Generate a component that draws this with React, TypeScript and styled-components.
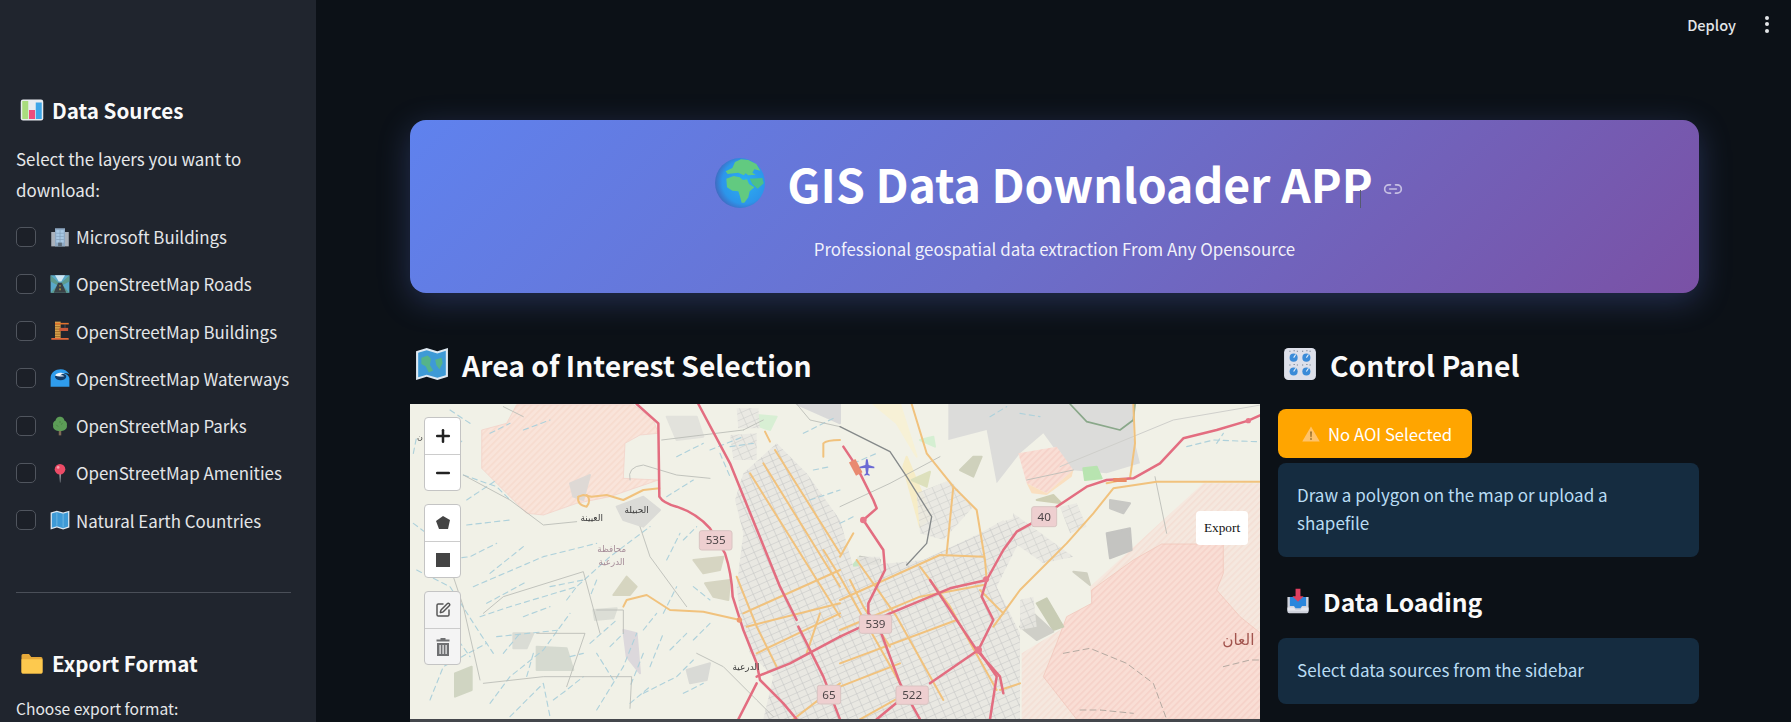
import React from "react";
import styled, { createGlobalStyle } from "styled-components";
import { Link2, Plus, Minus, SquarePen } from "lucide-react";

const Global = createGlobalStyle`
  html, body { margin: 0; padding: 0; background: #0c1117; }
  * { box-sizing: border-box; }
  body { font-family: "Noto Sans CJK SC", "Noto Sans", sans-serif; color: #fafafa; }
`;

const Shell = styled.div`
  display: flex;
  width: 1791px;
  height: 722px;
  overflow: hidden;
  background: #0c1117;
`;
const Sidebar = styled.aside`
  flex: 0 0 316px;
  min-width: 0;
  width: 316px;
  background: #20252e;
  padding: 92px 25px 0 16px;
`;
const SideHeading = styled.h3`
  display: flex;
  align-items: center;
  gap: 8px;
  margin: 0 0 0 4px;
  height: 36px;
  font-size: 20.6px;
  font-weight: 700;
  color: #fafafa;
`;
const SideText = styled.p`
  margin: 16px 0 0;
  font-size: 16.9px;
  line-height: 30.5px;
  color: #e6e8ea;
`;
const LayerList = styled.div`
  display: flex;
  flex-direction: column;
  gap: 27.3px;
  margin-top: 21.5px;
`;
const LayerRow = styled.label`
  display: flex;
  align-items: center;
  height: 20px;
  font-size: 16.9px;
  color: #e4e6e8;
  white-space: nowrap;
`;
const Check = styled.span`
  flex: 0 0 20px;
  width: 20px;
  height: 20px;
  border: 1.5px solid #50555e;
  border-radius: 5px;
  background: #1c2028;
  margin-right: 14px;
`;
const RowIcon = styled.span`
  display: inline-flex;
  margin-right: 6px;
`;
const Rule = styled.hr`
  border: 0;
  border-top: 1px solid #4a4f58;
  margin: 61.5px 0 0;
`;
const ExportHeading = styled(SideHeading)`
  margin-top: 52px;
`;
const SideSmall = styled.p`
  margin: 16px 0 0;
  font-size: 15.6px;
  line-height: 22px;
  color: #e6e8ea;
`;

const Main = styled.main`
  flex: 1;
  min-width: 0;
  display: flex;
  flex-direction: column;
`;
const TopBar = styled.header`
  flex: 0 0 48px;
  display: flex;
  align-items: center;
  justify-content: flex-end;
  gap: 29px;
  padding-right: 22px;
`;
const Deploy = styled.span`
  font-size: 14.6px;
  font-weight: 500;
  color: #e3e5e8;
`;
const Dots = styled.span`
  display: flex;
  flex-direction: column;
  gap: 2.5px;
  & > i { width: 4px; height: 4px; border-radius: 50%; background: #e3e5e8; display: block; }
`;
const Content = styled.div`
  padding: 72px 92px 0 94px;
`;
const Banner = styled.section`
  height: 173px;
  border-radius: 16px;
  background: linear-gradient(135deg, #5f82ee 0%, #6b6fcb 50%, #7a51a5 100%);
  box-shadow: 0 8px 32px rgba(102, 126, 234, 0.28);
  display: flex;
  flex-direction: column;
  align-items: center;
  padding-top: 33px;
`;
const TitleRow = styled.div`
  position: relative;
  display: flex;
  align-items: center;
  height: 60px;
  margin-left: 9px;
`;
const Title = styled.h1`
  margin: 0 0 0 22px;
  font-size: 46.4px;
  line-height: 60px;
  font-weight: 700;
  color: #fff;
  white-space: nowrap;
`;
const LinkMark = styled.span`
  display: inline-flex;
  margin: 12px 0 0 10px;
  color: rgba(255, 255, 255, 0.6);
`;
const Caret = styled.span`
  position: absolute;
  right: 42px;
  top: 37px;
  width: 1px;
  height: 18px;
  background: #555a70;
`;
const Subtitle = styled.p`
  margin: 24px 0 0;
  font-size: 16.9px;
  line-height: 24px;
  color: rgba(255, 255, 255, 0.92);
`;
const Columns = styled.div`
  display: grid;
  grid-template-columns: 850px 421px;
  gap: 18px;
`;
const Heading = styled.h2`
  display: flex;
  align-items: center;
  gap: 13px;
  height: 44px;
  margin: 49px 0 0 5px;
  font-size: 28.3px;
  font-weight: 700;
  color: #fafafa;
  white-space: nowrap;
`;
const MapFrame = styled.div`
  position: relative;
  height: 318px;
  margin-top: 18px;
  background: #44474c;
  overflow: hidden;
`;
const MapArt = styled.svg`
  display: block;
  width: 850px;
  height: 315px;
  filter: blur(0.55px);
`;
const MapTools = styled.div`
  position: absolute;
  left: 14px;
  top: 13px;
  display: flex;
  flex-direction: column;
  gap: 13px;
`;
const ToolGroup = styled.div`
  width: 37px;
  border: 1px solid #c4c4c4;
  border-radius: 4px;
  overflow: hidden;
  background: ${(p: { $muted?: boolean }) => (p.$muted ? "#f4f4f4" : "#fff")};
`;
const ToolButton = styled.div`
  height: 36px;
  display: flex;
  align-items: center;
  justify-content: center;
  color: #222;
  & + & { border-top: 1px solid #ccc; }
`;
const ExportBtn = styled.div`
  position: absolute;
  left: 786px;
  top: 107px;
  width: 52px;
  height: 34px;
  background: #fff;
  border-radius: 4px;
  display: flex;
  align-items: center;
  justify-content: center;
  font-family: "Liberation Serif", serif;
  font-size: 13.3px;
  color: #111;
`;
const Badge = styled.div`
  margin-top: 23px;
  width: 194px;
  height: 49px;
  border-radius: 8px;
  background: #ffa500;
  display: flex;
  align-items: center;
  padding-left: 23px;
  gap: 7px;
  font-size: 16.7px;
  color: #fff;
`;
const Info = styled.div`
  margin-top: ${(p: { $top: number }) => p.$top}px;
  padding: 18px 19px 20px;
  border-radius: 8px;
  background: #152c40;
  color: #b9dcf3;
  font-size: 17px;
  line-height: 28px;
`;
const SubHeading = styled.h2`
  display: flex;
  align-items: center;
  gap: 12px;
  height: 36px;
  margin: 26px 0 0 7px;
  font-size: 24.7px;
  font-weight: 700;
  color: #fafafa;
`;

type E = { s?: number };
const Svg = ({ s = 24, children }: E & { children: React.ReactNode }) => (
  <svg width={s} height={s} viewBox="0 0 32 32" aria-hidden="true">{children}</svg>
);
const ChartE = (p: E) => (
  <Svg {...p}>
    <rect x="1" y="2" width="30" height="28" rx="3" fill="#e8ecf0" />
    <rect x="3" y="4" width="8" height="24" fill="#a9dc7e" />
    <rect x="12" y="16" width="8" height="12" fill="#ee4d7c" />
    <rect x="21" y="6" width="8" height="22" fill="#3ea6e8" />
  </Svg>
);
const BuildingE = (p: E) => (
  <Svg {...p}>
    <rect x="2" y="8" width="28" height="23" fill="#aab2bc" />
    <rect x="8" y="2" width="16" height="29" fill="#8ea9c4" />
    <path d="M10 5h12v20H10z" fill="#a8c8e4" />
    <path d="M10 10h12M10 15h12M10 20h12M16 5v20" stroke="#7f9ab5" strokeWidth="1" />
    <rect x="13" y="25" width="6" height="6" fill="#5c6b7a" />
  </Svg>
);
const RoadE = (p: E) => (
  <Svg {...p}>
    <rect x="1" y="2" width="30" height="28" fill="#5aa9c9" />
    <path d="M1 2l15 14L31 2v10L20 18l11 12H1l11-12L1 12z" fill="#5d9a8d" />
    <path d="M13 14h6l7 16H6z" fill="#3a4046" />
    <path d="M16 18v2M16 23v3" stroke="#f4d23c" strokeWidth="1.5" />
    <path d="M8 2h16l-6 10h-4z" fill="#cfe6f2" />
  </Svg>
);
const CraneE = (p: E) => (
  <Svg {...p}>
    <rect x="8" y="1" width="9" height="27" fill="#d9a24a" />
    <path d="M8 5h9M8 9h9M8 13h9M8 17h9M8 21h9M8 25h9" stroke="#8a5a22" strokeWidth="1.2" />
    <rect x="8" y="3" width="22" height="2.5" fill="#e2722e" />
    <rect x="15" y="11" width="14" height="5" fill="#c9583a" />
    <path d="M24 5v6" stroke="#666" strokeWidth="1" />
    <rect x="2" y="27" width="28" height="3" rx="1" fill="#e0673a" />
  </Svg>
);
const WaveE = (p: E) => (
  <Svg {...p}>
    <path d="M1 30V16C1 7 9 2 17 2c6 0 11 3 14 8-3-2-6-2-9-1 5 0 8 3 9 7v14z" fill="#2f9cec" />
    <ellipse cx="17" cy="14" rx="9" ry="5.5" fill="#123a66" />
    <path d="M8 12c3-5 10-6 16-2-4-1-6 0-8 2 3-1 5 0 7 1-6 1-11 1-15-1z" fill="#f1f6fa" />
  </Svg>
);
const TreeE = (p: E) => (
  <Svg {...p}>
    <rect x="14" y="22" width="4" height="9" fill="#7d6a55" />
    <path d="M16 1c5 0 7 4 7 6 3 1 5 5 4 8 1 5-4 9-11 9S4 20 5 15C4 12 6 8 9 7c0-2 2-6 7-6z" fill="#5c9c57" />
    <path d="M10 14l3 3M20 11l-2 3M16 8v3" stroke="#477f44" strokeWidth="1.4" />
  </Svg>
);
const PinE = (p: E) => (
  <Svg {...p}>
    <path d="M15 16h2.4L16.5 31h-.6z" fill="#b7bcc2" />
    <circle cx="16" cy="10" r="8.5" fill="#ec4b66" />
    <circle cx="13" cy="7" r="2.2" fill="#f6a3b0" />
  </Svg>
);
const MapE = ({ s, green }: E & { green?: boolean }) => (
  <Svg s={s}>
    <path d="M1 4l10-3 10 3 10-3v27l-10 3-10-3-10 3z" fill="#dfe9f2" />
    <path d="M3 5.5l8-2.5 10 3 8-2.5v23l-8 2.5-10-3-8 2.5z" fill="#3e9ad6" />
    {green ? (
      <path d="M6 10l6-2 3 3-1 6 3 5-4 2-3-6-4-2zM19 12l6-2 1 5-3 6-3-4z" fill="#55b48a" />
    ) : (
      <path d="M11 3v22M21 6v22" stroke="#7fc1e8" strokeWidth="1.2" />
    )}
  </Svg>
);
const FolderE = (p: E) => (
  <Svg {...p}>
    <path d="M2 6a2 2 0 012-2h8l3 4h13a2 2 0 012 2v18a2 2 0 01-2 2H4a2 2 0 01-2-2z" fill="#e6a93a" />
    <path d="M2 11h28v17a2 2 0 01-2 2H4a2 2 0 01-2-2z" fill="#fdc94e" />
  </Svg>
);
const GlobeE = ({ s }: E) => (
  <svg width={s} height={s} viewBox="0 0 150 150" aria-hidden="true">
    <defs>
      <radialGradient id="gl" cx="58%" cy="48%" r="58%">
        <stop offset="0" stopColor="#2bb0f3" />
        <stop offset="0.75" stopColor="#2c95ea" />
        <stop offset="1" stopColor="#3f6bc2" />
      </radialGradient>
    </defs>
    <circle cx="75" cy="75" r="75" fill="url(#gl)" />
    <path d="M60 12 L78 4 L100 6 L124 18 L136 38 L118 34 L112 44 L122 50 L100 52 L92 46 L86 52 L70 44 L56 46 L38 48 L32 40 L52 30 Z" fill="#62ca80" />
    <path d="M34 62 L56 54 L74 58 L84 66 L96 64 L102 78 L118 88 L104 100 L100 118 L88 134 L80 134 L74 112 L70 100 L52 98 L36 88 Z" fill="#62ca80" />
    <path d="M104 62 L142 60 L146 76 L128 92 L112 78 Z" fill="#4cc088" />
  </svg>
);
const KnobsE = (p: E) => (
  <Svg {...p}>
    <rect x="1" y="1" width="30" height="30" rx="4" fill="#dde0ea" />
    {[[10, 10], [22, 10], [10, 23], [22, 23]].map(([x, y]) => (
      <g key={`${x}-${y}`}>
        <circle cx={x} cy={y} r="3.8" fill="#3a8bd8" />
        <path d={`M${x} ${y}l2-3`} stroke="#e8f2fb" strokeWidth="1" />
        <path d={`M${x - 4} ${y - 6}h1M${x} ${y - 6.5}h1M${x + 3} ${y - 6}h1`} stroke="#6b7687" strokeWidth="1" />
      </g>
    ))}
  </Svg>
);
const InboxE = (p: E) => (
  <Svg {...p}>
    <path d="M3 11h26v18a2 2 0 01-2 2H5a2 2 0 01-2-2z" fill="#cfd2dc" />
    <path d="M6 11h20v11h-5l-2 3h-6l-2-3H6z" fill="#2a86dc" />
    <path d="M3 24h8l2 3h6l2-3h8v4H3z" fill="#e4e6ee" />
    <path d="M13 1h6v9h4l-7 7-7-7h4z" fill="#dd3f60" />
  </Svg>
);
const WarnE = (p: E) => (
  <Svg {...p}>
    <path d="M16 4l14 24H2z" fill="#ffc36a" />
    <path d="M15 12h2l-.4 9h-1.2z" fill="#6a4a10" />
    <circle cx="16" cy="24" r="1.3" fill="#6a4a10" />
  </Svg>
);

const layers: [React.ReactNode, string][] = [
  [<BuildingE s={20} />, "Microsoft Buildings"],
  [<RoadE s={20} />, "OpenStreetMap Roads"],
  [<CraneE s={20} />, "OpenStreetMap Buildings"],
  [<WaveE s={20} />, "OpenStreetMap Waterways"],
  [<TreeE s={20} />, "OpenStreetMap Parks"],
  [<PinE s={20} />, "OpenStreetMap Amenities"],
  [<MapE s={20} />, "Natural Earth Countries"],
];

const water = [
  "M160,225 L260,260 L300,300", "M170,375 L300,360", "M190,560 L400,470 L560,430", "M210,650 L300,620 L500,560 L600,470 L720,380",
  "M230,610 L350,545", "M260,710 L450,690", "M10,370 L90,430", "M20,510 L120,560 L210,700 L250,760", "M60,900 L100,800 L230,730",
  "M240,910 L300,830 L400,750 L480,640", "M300,950 L400,850 L420,950", "M540,730 L620,660", "M560,930 L640,800 L680,700",
  "M700,880 L800,830 L850,780", "M700,690 L740,640", "M720,800 L760,700", "M850,720 L900,670", "M770,480 L810,400", "M770,290 L850,240",
  "M800,170 L880,130", "M900,150 L1000,110", "M960,140 L1030,130", "M1180,100 L1280,50", "M1210,210 L1260,200", "M1200,300 L1290,270",
  "M240,100 L300,70", "M340,90 L420,60", "M180,70 L120,30", "M10,160 L20,110", "M170,300 L260,240", "M240,520 L340,440", "M50,640 L70,720",
  "M430,900 L470,870 L520,830", "M280,760 L330,700", "M610,840 L560,760", "M760,640 L800,560", "M850,560 L900,600",
  "M2330,140 L2410,120 L2540,125", "M2420,130 L2440,100", "M1290,370 L1330,350", "M1740,50 L1790,20", "M1830,40 L1890,50", "M1330,190 L1400,160",
  "M660,910 L720,860", "M120,150 L160,120", "M50,250 L120,230", "M100,480 L180,470 L260,430", "M420,560 L520,540", "M340,650 L420,620",
  "M560,540 L540,590", "M80,640 L140,620", "M130,700 L180,770", "M370,760 L350,830", "M470,600 L500,560", "M780,750 L830,700", "M930,160 L960,230",
  "M820,420 L860,380", "M700,760 L660,860", "M480,770 L520,760", "M600,740 L640,700", "M820,880 L880,850",
];
const grey = [
  "M755,120 L1000,90", "M160,225 L300,300 L400,375 L500,365", "M690,380 L720,470 L830,620", "M220,640 L280,590 L520,515 L570,700",
  "M560,630 L640,630 L640,700", "M220,850 L400,830 L665,830 L660,925", "M210,840 L160,620 L130,530", "M380,700 L525,700 L470,860",
  "M660,240 Q650,200 700,195 L800,225 L900,235", "M1590,170 L1440,250 L1290,320", "M1850,240 L1990,210", "M2235,230 L2270,400",
  "M1090,950 L1040,900 L940,800 L860,760", "M1290,80 L1200,60 L1160,12", "M1000,90 L1060,60", "M280,20 L340,50",
];
const orange = [
  "M505,290 L520,285 L545,290 L590,285 L640,300 L700,270 L748,265", "M505,290 Q500,315 530,320 Q545,300 530,285", "M640,620 L650,600 L710,585 L780,630 L880,635 L990,660",
  "M1240,170 L1240,130 Q1250,120 1290,120", "M1020,220 L1290,650", "M1060,190 L1290,560", "M1095,150 L1290,460", "M1065,95 L1080,125", "M980,530 L1040,680 L1100,800",
  "M1000,640 L1290,510", "M1010,680 L1290,610", "M1040,760 L1290,640", "M1150,958 L1290,850", "M1190,760 L1230,640",
  "M1505,12 L1550,160 L1630,260 L1700,330 L1725,480 L1730,540", "M1630,260 L1610,460", "M2170,12 L2175,130 L2160,235 L2090,250",
  "M2552,245 L2240,245 L2110,265 L2050,340 L1970,430 L1830,570 L1750,680", "M1290,600 L1590,465 L1720,470", "M1290,690 L1530,590 L1720,555", "M1290,790 L1640,660",
  "M1290,860 L1470,790", "M1710,570 L1780,640", "M1240,450 L1290,530 L1470,850", "M1530,500 L1620,620 L1760,870", "M1350,958 L1490,880", "M1770,870 L1830,850",
  "M1340,480 L1460,650 L1600,900", "M1290,470 L1330,400", "M1320,540 L1360,620 L1440,740",
];
const red = [
  "M680,12 L745,70 L748,290 Q760,310 800,320 Q860,340 900,385 L945,460 Q965,520 968,590 L1000,690 L1040,790 L1050,840 L1120,910 L1160,958",
  "M865,12 L960,190 L1110,560 L1160,660", "M1165,680 L1240,830 L1290,958", "M1040,830 L1140,790 L1290,710", "M985,958 L1040,850",
  "M2552,45 L2515,62 L2420,90 L2320,115 L2250,190 L2170,235 L2090,240 L2030,260 L1940,320 L1865,370 L1820,395 L1780,450 L1730,540 L1715,590 L1750,660 L1705,750 L1760,830 L1740,958",
  "M1300,140 L1340,200 L1390,300 L1400,325 L1360,360 L1420,450 L1425,510 L1375,610 L1375,640 L1410,690 L1470,850 L1530,958", "M1730,540 L1620,565 L1440,640 L1290,710",
  "M1560,540 L1700,750 L1770,830 L1780,880", "M1705,750 L1560,850", "M1400,958 L1470,900",
];
const patches: [string, string][] = [
  ["M610,585 L650,530 L680,560 L660,585 Z", "#d6d5c0"], ["M310,700 L370,700 L350,745 L310,745 Z", "#dadcd5"], ["M380,740 L470,745 L490,810 L380,810 Z", "#d6dad0"],
  ["M135,820 L185,800 L185,870 L135,890 Z", "#d0d5c2"], ["M640,690 L680,700 L690,820 L650,770 Z", "#dcd8dc"], ["M850,480 L940,470 L930,510 L880,520 Z", "#d6d5c2"],
  ["M885,550 L960,540 L955,600 L910,590 Z", "#d6d5c2"], ["M830,810 L900,790 L890,840 L840,850 Z", "#d9dad6"], ["M620,320 L700,290 L750,330 L700,380 L640,360 Z", "#dbdbd7"],
  ["M480,250 L540,225 L520,300 L490,290 Z", "#ded9d5"], ["M550,630 L620,625 L610,655 L555,660 Z", "#dcded6"], ["M770,50 L860,50 L880,110 L800,120 Z", "#e2e2dc"],
  ["M1160,12 L1290,12 L1290,70 Z", "#d9d9d9"], ["M1390,12 L1470,12 L1520,170 L1460,70 Z", "#f7f1d6"], ["M1480,200 L1530,380 L1565,350 L1490,170 Z", "#f6ecc6"],
  ["M1302,530 L1350,470 L1360,520 L1310,560 Z", "#c6e5c4"], ["M1370,850 L1420,860 L1430,940 L1380,930 Z", "#c3e8c5"], ["M1530,120 L1570,110 L1575,140 Z", "#d5efd2"],
  ["M1650,210 L1690,170 L1715,170 L1690,230 Z", "#cfd1bc"], ["M1505,240 L1560,215 L1550,260 Z", "#dde0bc"], ["M1880,300 L1930,285 L1955,310 Z", "#cfcfb4"],
  ["M1880,610 L1910,595 L1960,680 L1930,690 Z", "#c8ccb4"], ["M1830,680 L1870,640 L1930,695 L1880,720 Z", "#cfcfc8"], ["M2090,400 L2160,385 L2165,450 L2100,475 Z", "#c4c4c1"],
  ["M2100,300 L2160,310 L2140,340 L2100,325 Z", "#c8c8c4"], ["M1990,515 L2030,520 L2040,555 Z", "#cfcfc0"], ["M2020,205 L2060,200 L2075,235 L2025,240 Z", "#b8e4b0"],
  ["M1350,470 L1410,480 L1400,520 L1360,510 Z", "#c2c2ba"], ["M1040,45 L1100,50 L1080,90 L1050,80 Z", "#d8efd4"],
];
const shields: [number, number, number, number, string][] = [
  [868, 392, 98, 58, "535"], [1222, 856, 70, 56, "65"], [1865, 320, 75, 60, "40"], [1348, 645, 97, 55, "539"], [1458, 858, 97, 55, "522"],
];

const MapPicture = () => (
  <MapArt viewBox="0 12 2550 945" preserveAspectRatio="none" aria-hidden="true">
    <defs>
      <pattern id="mesh" width="27" height="19" patternUnits="userSpaceOnUse" patternTransform="rotate(-24)">
        <rect width="27" height="19" fill="#e9e8e2" />
        <path d="M0 0H27M0 0V19" stroke="#c1c3c3" strokeWidth="3" />
      </pattern>
      <pattern id="hatchA" width="14" height="14" patternUnits="userSpaceOnUse" patternTransform="rotate(-45)">
        <rect width="14" height="14" fill="#f9ded5" />
        <rect width="14" height="5" fill="#f6d2c9" />
      </pattern>
      <pattern id="hatchB" width="14" height="14" patternUnits="userSpaceOnUse" patternTransform="rotate(-45)">
        <rect width="14" height="14" fill="#f5e8df" />
        <rect width="14" height="5" fill="#f4dfd5" />
      </pattern>
      <pattern id="hatchC" width="14" height="14" patternUnits="userSpaceOnUse" patternTransform="rotate(-45)">
        <rect width="14" height="14" fill="#f9e4da" />
        <rect width="14" height="5" fill="#f7dccf" />
      </pattern>
    </defs>
    <rect x="0" y="0" width="2550" height="960" fill="#f1f1e7" />
    <path d="M1615,12 L2170,12 L2170,110 L2190,190 L2090,220 L1980,210 L1900,100 L1830,160 L1760,250 L1730,90 L1615,120 Z" fill="#dcdcda" />
    <path d="M320,14 L670,14 L730,60 L745,100 L690,105 L645,130 L640,235 L745,240 L600,290 L500,310 L400,345 L350,340 L290,280 L215,205 L215,90 L290,70 Z" fill="url(#hatchC)" stroke="#f2cfc5" strokeWidth="2" />
    <path d="M2040,560 L2380,250 L2552,250 L2552,958 L1835,958 L1835,760 L1950,690 L2045,610 Z" fill="url(#hatchB)" />
    <path d="M2255,432 L2440,432 L2440,520 L2420,570 L2490,650 L2552,700 L2552,958 L2000,958 L1900,830 L1940,730 L1970,650 L2045,610 L2045,570 L2170,480 Z" fill="url(#hatchA)" stroke="#f0c2b6" strokeWidth="2" strokeLinejoin="round" />
    <path d="M1825,160 L1940,140 L1990,210 L1910,280 L1850,250 Z" fill="url(#hatchA)" />
    <path d="M1850,250 L1910,280 L1990,210 L1985,230 L1910,285 L1865,280 Z" fill="#fadfc0" />
    {patches.map(([d, f]) => <path key={d} d={d} fill={f} stroke={f} strokeWidth="6" strokeLinejoin="round" />)}
    <path d="M1000,220 L1100,130 L1190,220 L1290,360 L1330,500 L1540,480 L1710,400 L1780,360 L1830,420 L1760,560 L1830,700 L1830,957 L1060,957 L1090,830 L1020,760 L990,640 L980,560 L1000,400 L975,300 Z" fill="url(#mesh)" />
    <path d="M980,25 L1045,25 L1050,85 L985,85 Z M960,105 L1040,100 L1040,180 L970,180 Z M1760,370 L1810,355 L1830,420 L1780,435 Z M1950,320 L2000,310 L2030,380 L1980,400 Z M1810,340 L1990,470 L1900,490 L1800,420 Z M1830,600 L1870,590 L1880,680 L1830,690 Z M1520,280 L1620,240 L1690,320 L1600,420 L1530,400 Z M1340,470 L1410,470 L1410,520 L1350,520 Z" fill="url(#mesh)" opacity="0.85" />
    <g fill="none" strokeLinecap="round" strokeLinejoin="round">
      {water.map((d) => <path key={d} d={d} stroke="#aed1db" strokeWidth="3.4" strokeDasharray="16 12" />)}
      <path d="M1960,760 L2040,745 L2150,790 L2230,850 L2270,958" stroke="#b5aaa2" strokeWidth="3" strokeDasharray="18 12" />
      <path d="M2010,930 L2070,930 L2170,940" stroke="#b5aaa2" strokeWidth="3" strokeDasharray="18 12" />
      <path d="M2440,800 L2520,780 L2552,780" stroke="#b5aaa2" strokeWidth="3" strokeDasharray="18 12" />
      {grey.map((d) => <path key={d} d={d} stroke="#b9bcb6" strokeWidth="2.6" />)}
      <path d="M1290,80 L1440,155 L1490,230 L1565,350 L1550,430 L1490,495" stroke="#85898a" strokeWidth="4" />
      <path d="M1950,200 L2290,60 L2552,15" stroke="#cfcfcb" strokeWidth="3" />
      <path d="M1980,12 L2030,65 L2130,90 L2170,60 L2175,12" stroke="#8aa88a" strokeWidth="5" />
      {orange.map((d) => <path key={d} d={d} stroke="#f1c27d" strokeWidth="6" />)}
      {red.map((d) => <path key={d} d={d} stroke="#e36d80" strokeWidth="7.5" />)}
    </g>
    <g fill="#e8788a">
      <circle cx="1705" cy="750" r="11" /><circle cx="1728" cy="538" r="9" /><circle cx="1360" cy="360" r="10" /><circle cx="2515" cy="62" r="8" />
      <rect x="2110" y="234" width="40" height="12" fill="#ea8a66" /><rect x="1325" y="180" width="22" height="45" fill="#e98a70" transform="rotate(-28 1336 200)" />
      <circle cx="988" cy="660" r="8" fill="#ef9a70" />
    </g>
    <path d="M1368,178 l5,0 l3,17 l17,5 l0,5 l-17,-1 l-2,16 l5,4 l0,3 l-8,-2 l-8,2 l0,-3 l5,-4 l-2,-16 l-17,1 l0,-5 l17,-5 z" fill="#6c6bd4" />
    {shields.map(([x, y, w, h, t]) => (
      <g key={t}>
        <rect x={x} y={y} width={w} height={h} rx="7" fill="#eecfd0" stroke="#d9c4c2" strokeWidth="3" />
        <text x={x + w / 2} y={y + h / 2 + 12} textAnchor="middle" fontFamily="'Noto Sans', sans-serif" fontSize="35" fill="#4e4648">{t}</text>
      </g>
    ))}
    <g fontFamily="'DejaVu Sans', 'Noto Sans', sans-serif" textAnchor="middle">
      <text x="545" y="363" fontSize="27" fill="#3c3c3c">العيينة</text>
      <text x="680" y="340" fontSize="27" fill="#3c3c3c">الحبيلة</text>
      <text x="605" y="455" fontSize="26" fill="#a58c98">محافظة</text>
      <text x="605" y="496" fontSize="26" fill="#a58c98">الدرعية</text>
      <text x="1008" y="810" fontSize="27" fill="#3c3c3c">الدرعية</text>
      <text x="30" y="120" fontSize="24" fill="#3c3c3c">ن</text>
      <text x="2485" y="735" fontSize="46" fill="#a2544e">العان</text>
    </g>
  </MapArt>
);

const TrashIcon = () => (
  <svg width="16" height="18" viewBox="0 0 16 18" fill="#6f7072" aria-hidden="true">
    <path d="M5.5 0h5v1.5h4V3.5h-13V1.5h4zM2 5h12v13H2zM4.5 7v9h1.2V7zm3 0v9h1.2V7zm3 0v9h1.2V7z" fillRule="evenodd" />
  </svg>
);

export default function App() {
  return (
    <Shell>
      <Global />
      <Sidebar>
        <SideHeading><ChartE s={24} />Data Sources</SideHeading>
        <SideText>Select the layers you want to download:</SideText>
        <LayerList>
          {layers.map(([icon, label]) => (
            <LayerRow key={label}><Check /><RowIcon>{icon}</RowIcon>{label}</LayerRow>
          ))}
        </LayerList>
        <Rule />
        <ExportHeading><FolderE s={24} />Export Format</ExportHeading>
        <SideSmall>Choose export format:</SideSmall>
      </Sidebar>
      <Main>
        <TopBar>
          <Deploy>Deploy</Deploy>
          <Dots><i /><i /><i /></Dots>
        </TopBar>
        <Content>
          <Banner>
            <TitleRow>
              <GlobeE s={50} />
              <Title>GIS Data Downloader APP</Title>
              <LinkMark><Link2 size={20} strokeWidth={2} /></LinkMark>
              <Caret />
            </TitleRow>
            <Subtitle>Professional geospatial data extraction From Any Opensource</Subtitle>
          </Banner>
          <Columns>
            <div>
              <Heading><MapE s={34} green />Area of Interest Selection</Heading>
              <MapFrame>
                <MapPicture />
                <MapTools>
                  <ToolGroup>
                    <ToolButton><Plus size={20} strokeWidth={3} /></ToolButton>
                    <ToolButton><Minus size={20} strokeWidth={3} /></ToolButton>
                  </ToolGroup>
                  <ToolGroup>
                    <ToolButton>
                      <svg width="16" height="16" viewBox="0 0 16 16" fill="#444" aria-hidden="true"><path d="M8 1l7 4-2 9H4L1 6z" /></svg>
                    </ToolButton>
                    <ToolButton>
                      <svg width="14" height="14" viewBox="0 0 14 14" fill="#444" aria-hidden="true"><rect width="14" height="14" /></svg>
                    </ToolButton>
                  </ToolGroup>
                  <ToolGroup $muted>
                    <ToolButton><SquarePen size={16} color="#555" strokeWidth={2.2} /></ToolButton>
                    <ToolButton><TrashIcon /></ToolButton>
                  </ToolGroup>
                </MapTools>
                <ExportBtn>Export</ExportBtn>
              </MapFrame>
            </div>
            <div>
              <Heading><KnobsE s={34} />Control Panel</Heading>
              <Badge><WarnE s={20} />No AOI Selected</Badge>
              <Info $top={5}>Draw a polygon on the map or upload a shapefile</Info>
              <SubHeading><InboxE s={26} />Data Loading</SubHeading>
              <Info $top={19}>Select data sources from the sidebar</Info>
            </div>
          </Columns>
        </Content>
      </Main>
    </Shell>
  );
}
